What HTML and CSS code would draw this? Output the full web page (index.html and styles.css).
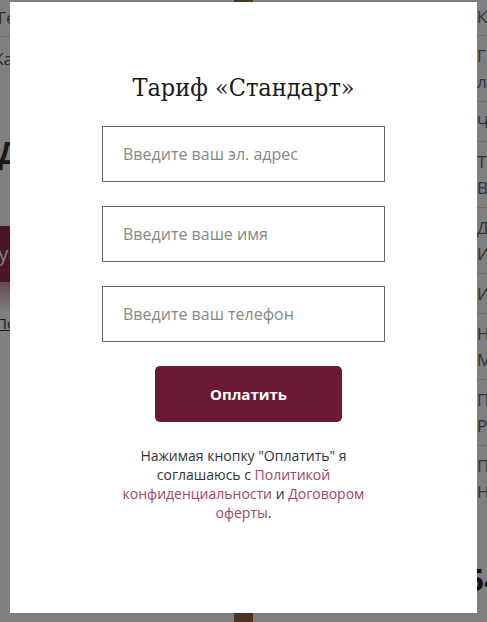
FILE: index.html
```html
<!DOCTYPE html>
<html lang="ru">
<head>
    <meta charset="UTF-8">
    <meta name="viewport" content="width=device-width, initial-scale=1.0">
    <title>Тариф «Стандарт»</title>
    <link rel="stylesheet" href="styles.css">
</head>
<body>

    <!-- Страница под модальным окном -->
    <div class="page">
        <div class="page-left">
            <div class="left-row">Генеральный тариф</div>
            <div class="left-row">Как это работает</div>
            <h2 class="left-title">Доступ к курсу</h2>
            <div class="left-banner">Купить курс</div>
            <div class="left-fade"></div>
            <a class="left-link" href="#">Подробнее о тарифе</a>
        </div>
        <div class="page-pole"></div>
        <div class="page-right">
            <div class="right-row">Курс</div>
            <div class="right-row">Групповые<br>лекции</div>
            <div class="right-row">Чек-листы</div>
            <div class="right-row">Тесты<br>Вебинары</div>
            <div class="right-row">Доступ к тестам<br>Итоговая работа</div>
            <div class="right-row">Итоговая проверка</div>
            <div class="right-row">Наставник<br>Ментор</div>
            <div class="right-row">Поддержка<br>Рабочая тетрадь</div>
            <div class="right-row last">Поддержка<br>Наставника</div>
            <div class="right-price">5400 ₽</div>
        </div>
    </div>

    <div class="overlay"></div>

    <div class="modal">
        <h1 class="modal-title">Тариф «Стандарт»</h1>
        <form class="modal-form" onsubmit="return false">
            <input type="email" placeholder="Введите ваш эл. адрес">
            <input type="text" placeholder="Введите ваше имя">
            <input type="tel" placeholder="Введите ваш телефон">
            <button type="submit">Оплатить</button>
        </form>
        <p class="modal-note">
            Нажимая кнопку "Оплатить" я соглашаюсь с <a href="#">Политикой конфиденциальности</a> и <a href="#">Договором оферты</a>.
        </p>
    </div>

</body>
</html>
```

FILE: styles.css
```css
body {
    font-family: 'Open Sans', sans-serif;
    background-color: #ffffff;
    margin: 0;
    padding: 0;
    overflow: hidden;
}

/* Страница позади */
.page {
    display: flex;
    height: 622px;
    color: #555;
    font-size: 16px;
}

.page-left {
    width: 234px;
    display: flex;
    flex-direction: column;
    white-space: nowrap;
    overflow: hidden;
}

.left-row {
    height: 36px;
    line-height: 36px;
    border-bottom: 1px solid #ddd;
    text-indent: -2px;
}

.left-row:nth-child(2) {
    height: 44px;
    line-height: 44px;
    text-indent: -6px;
    border-bottom: none;
}

.left-title {
    font-size: 30px;
    color: #333;
    margin: 52px 0 0 0;
    text-indent: -2px;
    line-height: 40px;
}

.left-banner {
    margin-top: 53px;
    height: 56px;
    line-height: 56px;
    background-color: #942a4a;
    color: #fff;
    font-size: 20px;
    text-indent: -14px;
}

.left-fade {
    height: 30px;
    background: linear-gradient(#c890a0, #ffffff);
}

.left-link {
    line-height: 22px;
    color: #333;
    font-size: 15px;
    text-indent: -4px;
}

.page-pole {
    width: 19px;
    background-color: #946a40;
}

.page-right {
    flex: 1;
    display: flex;
    flex-direction: column;
    white-space: nowrap;
    overflow: hidden;
}

.right-row {
    border-bottom: 1px solid #ddd;
    padding: 7px 0 6px 224px;
    line-height: 26px;
    font-size: 17px;
    color: #666;
}

.right-row:first-child {
    padding-top: 4px;
    padding-bottom: 5px;
}

.right-row.last {
    border-bottom: none;
}

.right-price {
    margin-top: 48px;
    padding-left: 214px;
    font-size: 30px;
    font-weight: bold;
    color: #222;
}

.overlay {
    position: fixed;
    top: 0;
    left: 0;
    right: 0;
    bottom: 0;
    background-color: rgba(0, 0, 0, 0.5);
}

/* Модальное окно */
.modal {
    position: fixed;
    top: 2px;
    left: 10px;
    width: 467px;
    height: 611px;
    background-color: #ffffff;
    box-sizing: border-box;
    padding-top: 70px;
    display: flex;
    flex-direction: column;
    align-items: center;
}

.modal-title {
    font-family: 'DejaVu Serif Condensed', 'DejaVu Serif', serif;
    font-weight: normal;
    font-size: 25px;
    color: #1a1a1a;
    margin: 0 0 22px 0;
    line-height: 32px;
}

.modal-form {
    display: flex;
    flex-direction: column;
    align-items: center;
    gap: 24px;
}

.modal-form input {
    width: 283px;
    height: 56px;
    box-sizing: border-box;
    border: 1px solid #666;
    padding: 0 20px;
    font-family: 'Open Sans', sans-serif;
    font-size: 16px;
    color: #333;
    outline: none;
}

.modal-form input::placeholder {
    color: #888;
}

.modal-form button {
    width: 187px;
    height: 56px;
    margin-left: 10px;
    background-color: #6b1832;
    color: #ffffff;
    border: none;
    border-radius: 5px;
    font-family: 'Open Sans', sans-serif;
    font-weight: bold;
    font-size: 15px;
    cursor: pointer;
}

.modal-note {
    width: 270px;
    margin: 24px 0 0 0;
    text-align: center;
    font-size: 14px;
    line-height: 19px;
    color: #333;
}

.modal-note a {
    color: #a0456b;
    text-decoration: none;
}
```
